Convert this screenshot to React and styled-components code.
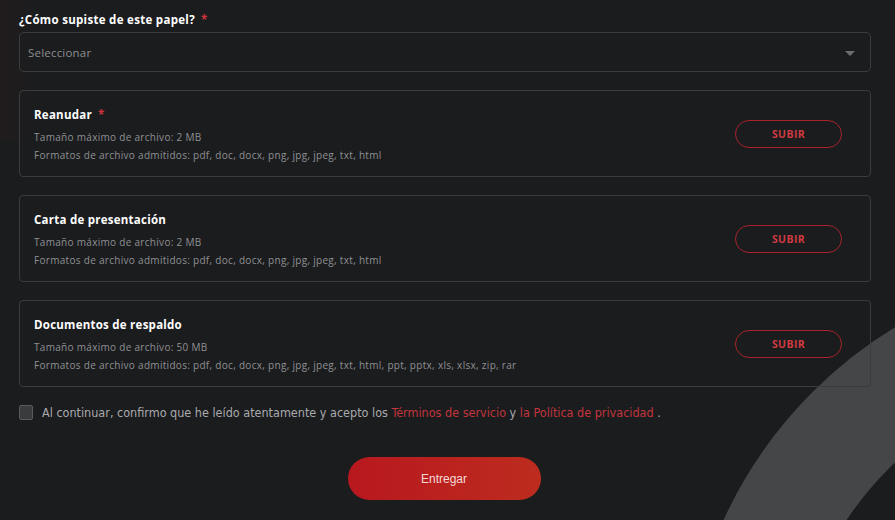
import React, { useState } from 'react'
import styled, { createGlobalStyle } from 'styled-components'

const GlobalStyle = createGlobalStyle`
  html, body {
    margin: 0;
    padding: 0;
    background: #1b1c1e;
    height: 100%;
    overflow: hidden;
  }
  * { box-sizing: border-box; }
`

const uploads = [
  {
    title: 'Reanudar',
    required: true,
    size: '2 MB',
    formats: 'pdf, doc, docx, png, jpg, jpeg, txt, html',
  },
  {
    title: 'Carta de presentación',
    size: '2 MB',
    formats: 'pdf, doc, docx, png, jpg, jpeg, txt, html',
  },
  {
    title: 'Documentos de respaldo',
    size: '50 MB',
    formats: 'pdf, doc, docx, png, jpg, jpeg, txt, html, ppt, pptx, xls, xlsx, zip, rar',
  },
]

function App() {
  const [agreed, setAgreed] = useState(false)

  return (
    <Page>
      <GlobalStyle />
      <Glow />
      <Ring viewBox="0 0 895 520" aria-hidden="true">
        <circle cx="1122" cy="702" r="384" fill="none" stroke="#454648" strokeWidth="108" />
      </Ring>
      <Form>
        <Field>
          <Label>¿Cómo supiste de este papel?<Star>*</Star></Label>
          <Select>
            <span>Seleccionar</span>
            <Caret />
          </Select>
        </Field>

        {uploads.map(u => (
          <UploadCard key={u.title}>
            <Info>
              <CardTitle>{u.title}{u.required && <Star>*</Star>}</CardTitle>
              <Hint>Tamaño máximo de archivo: {u.size}</Hint>
              <Hint>Formatos de archivo admitidos: {u.formats}</Hint>
            </Info>
            <UploadButton>SUBIR</UploadButton>
          </UploadCard>
        ))}

        <Consent>
          <Box checked={agreed} onClick={() => setAgreed(!agreed)} />
          <span>
            Al continuar, confirmo que he leído atentamente y acepto los{' '}
            <Link href="#">Términos de servicio</Link> y{' '}
            <Link href="#">la Política de privacidad</Link> .
          </span>
        </Consent>

        <Actions>
          <Submit>Entregar</Submit>
        </Actions>
      </Form>
    </Page>
  )
}

export default App

const Page = styled.div`
  position: relative;
  width: 895px;
  height: 520px;
  overflow: hidden;
  background: #1b1c1e;
  font-family: 'Open Sans', 'Liberation Sans', sans-serif;
`
const Glow = styled.div`
  position: absolute;
  left: 0;
  top: 0;
  width: 34px;
  height: 140px;
  background: linear-gradient(90deg, rgba(45, 28, 26, 0.35), rgba(45, 28, 26, 0));
  pointer-events: none;
`
const Ring = styled.svg`
  position: absolute;
  left: 0;
  top: 0;
  width: 895px;
  height: 520px;
  pointer-events: none;
`
const Form = styled.div`
  position: relative;
  z-index: 1;
  width: 852px;
  margin-left: 19px;
  padding-top: 13px;
  display: flex;
  flex-direction: column;
`
const Field = styled.div`
  display: flex;
  flex-direction: column;
  gap: 5px;
  margin-bottom: 18px;
`
const Label = styled.div`
  color: #ffffff;
  font-size: 11.5px;
  font-weight: 700;
  letter-spacing: 0.3px;
  line-height: 14px;
`
const Star = styled.span`
  color: #d3343c;
  margin-left: 6px;
  font-weight: 700;
`
const Select = styled.div`
  height: 40px;
  border: 1px solid #3b3c3f;
  border-radius: 5px;
  display: flex;
  align-items: center;
  justify-content: space-between;
  padding: 0 15px 0 8px;
  color: #8d8e90;
  font-size: 11.5px;
  letter-spacing: 0.2px;
`
const Caret = styled.span`
  width: 0;
  height: 0;
  margin-top: 3px;
  border-left: 5px solid transparent;
  border-right: 5px solid transparent;
  border-top: 5px solid #6c6d70;
`
const UploadCard = styled.div`
  height: 87px;
  margin-bottom: 18px;
  border: 1px solid #3b3c3f;
  border-radius: 4px;
  display: flex;
  align-items: center;
  justify-content: space-between;
  padding: 0 28px 0 14px;
`
const Info = styled.div`
  display: flex;
  flex-direction: column;
  margin-top: 5px;
`
const CardTitle = styled.div`
  color: #ffffff;
  font-size: 11.5px;
  font-weight: 700;
  letter-spacing: 0.25px;
  line-height: 14px;
  margin-bottom: 6px;
`
const Hint = styled.div`
  color: #8f9093;
  font-size: 10px;
  letter-spacing: 0.3px;
  line-height: 18px;
`
const UploadButton = styled.button`
  width: 107px;
  height: 28px;
  background: transparent;
  border: 1px solid #a8232b;
  border-radius: 14px;
  color: #cf3a40;
  font-family: 'Open Sans', 'Liberation Sans', sans-serif;
  font-size: 10.5px;
  font-weight: 700;
  letter-spacing: 0.4px;
  cursor: pointer;
`
const Consent = styled.label`
  display: flex;
  align-items: center;
  gap: 9px;
  color: #a9aaad;
  font-family: 'DejaVu Sans Condensed', 'Liberation Sans', sans-serif;
  font-size: 12.5px;
`
const Box = styled.span`
  width: 14px;
  height: 15px;
  flex: none;
  border: 1px solid #5a5b5e;
  border-radius: 2px;
  background: ${props => props.checked ? '#c0272d' : '#3a3b3d'};
  cursor: pointer;
`
const Link = styled.a`
  color: #c2353d;
  text-decoration: none;
`
const Actions = styled.div`
  display: flex;
  justify-content: center;
  margin-top: 37px;
  padding-right: 2px;
`
const Submit = styled.button`
  width: 193px;
  height: 43px;
  border: none;
  border-radius: 22px;
  background: linear-gradient(90deg, #b8181f, #bd2c1e);
  color: #f6d8d6;
  font-family: 'Liberation Sans', sans-serif;
  font-size: 12px;
  cursor: pointer;
`
